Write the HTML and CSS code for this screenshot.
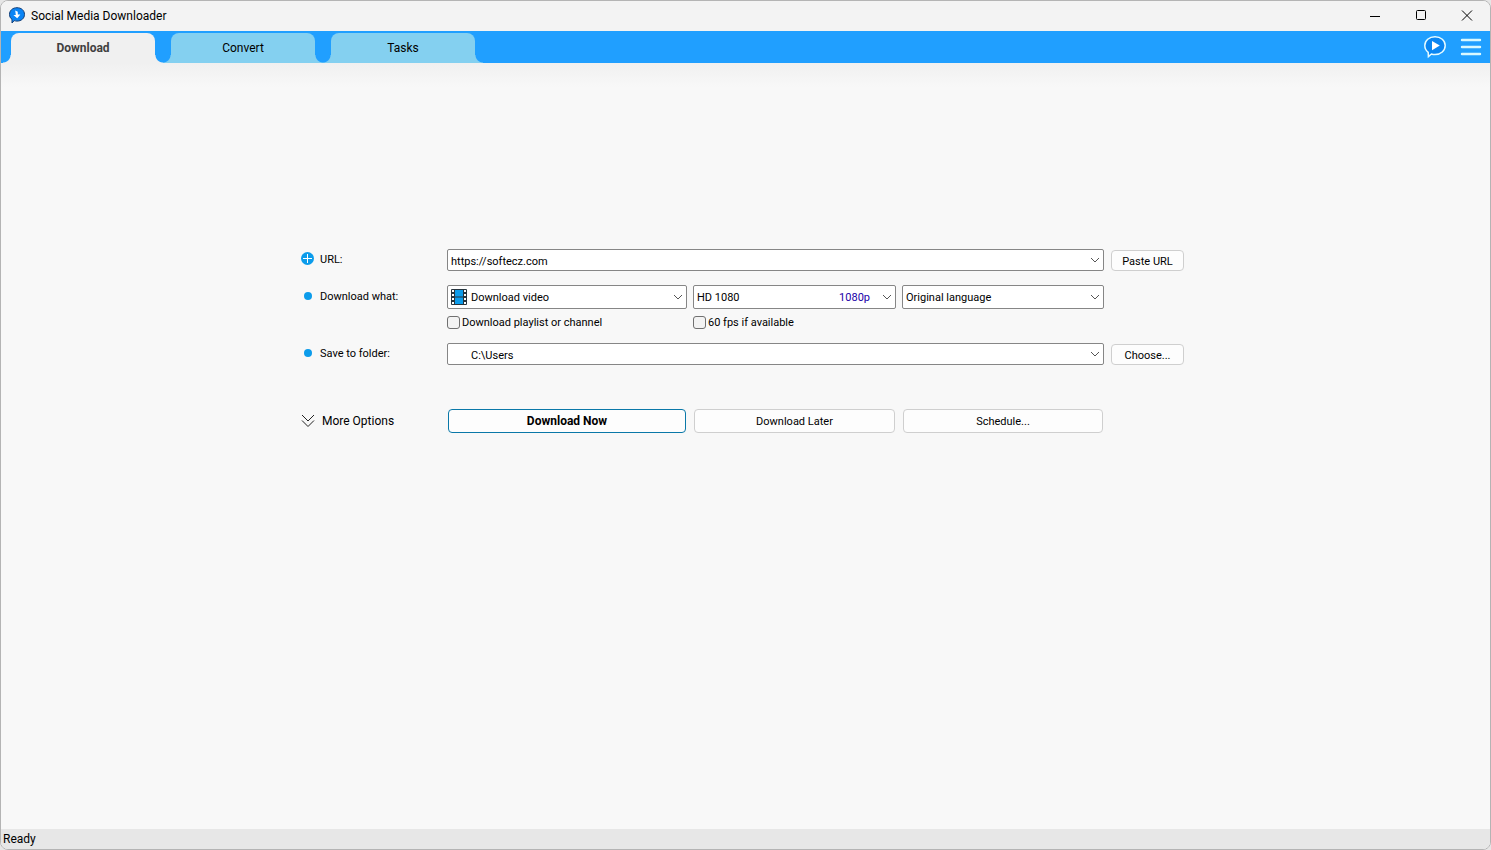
FILE: index.html
```html
<!DOCTYPE html>
<html lang="en">
<head>
    <meta charset="UTF-8">
    <meta name="viewport" content="width=device-width, initial-scale=1.0">
    <title>Social Media Downloader</title>
    <link rel="stylesheet" href="styles.css">
</head>
<body>
    <div class="window">
        <header class="titlebar">
            <svg class="app-icon" width="18" height="18" viewBox="0 0 18 18">
                <path d="M9 0.700C13.400 0.700 16.500 3.500 16.500 7.400S13.400 14.100 9 14.100C7.900 14.100 7 13.900 6.200 13.600L4 16V12.400C2.400 11.200 1.500 9.500 1.500 7.400C1.500 3.500 4.600 0.700 9 0.700Z" fill="#0a84f5" stroke="#123f78" stroke-width="1"/>
                <path d="M7.200 3.600L9.800 4.800L9.800 7.400L12.400 7.600L9.200 11.200L5.400 8H7.800Z" fill="#fff"/>
            </svg>
            <h1>Social Media Downloader</h1>
            <div class="window-buttons">
                <button type="button" aria-label="Minimize">
                    <svg width="12" height="12" viewBox="0 0 12 12"><path d="M1 6.500H11" stroke="#000"/></svg>
                </button>
                <button type="button" aria-label="Maximize">
                    <svg width="12" height="12" viewBox="0 0 12 12"><rect x="1.500" y="0.500" width="9" height="9" rx="1" fill="none" stroke="#000"/></svg>
                </button>
                <button type="button" aria-label="Close">
                    <svg width="12" height="12" viewBox="0 0 12 12"><path d="M1 0.500L11 10.500M11 0.500L1 10.500" stroke="#000"/></svg>
                </button>
            </div>
        </header>

        <nav class="tabbar">
            <button type="button" class="tab active">Download</button>
            <button type="button" class="tab">Convert</button>
            <button type="button" class="tab">Tasks</button>
            <div class="tabbar-tools">
                <button type="button" aria-label="Play">
                    <svg width="24" height="24" viewBox="0 0 24 24">
                        <path d="M12 1.700C17.800 1.700 22.200 5.500 22.200 10.600S17.800 19.600 12 19.600C10.700 19.600 9.500 19.400 8.400 19L5.400 21.600L5.200 17.400C3 15.700 1.800 13.400 1.800 10.600C1.800 5.500 6.200 1.700 12 1.700Z" fill="#0b86f2" stroke="#e6fbff" stroke-width="1.500"/>
                        <path d="M9 6L16.800 10.600L9 15.200Z" fill="#fff"/>
                    </svg>
                </button>
                <button type="button" aria-label="Menu">
                    <svg width="24" height="24" viewBox="0 0 24 24">
                        <path d="M3 5H21M3 12H21M3 19H21" stroke="#d8f8ff" stroke-width="2.400" stroke-linecap="round"/>
                    </svg>
                </button>
            </div>
        </nav>

        <main>
            <form class="download-form">
                <div class="row">
                    <label class="row-label" for="url">
                        <svg width="14" height="14" viewBox="0 0 14 14">
                            <circle cx="6.500" cy="6.500" r="6.500" fill="#0c9ceb"/>
                            <path d="M6.500 2V11M2 6.500H11" stroke="#fff" stroke-width="1"/>
                        </svg>
                        URL:
                    </label>
                    <div class="combo wide">
                        <input type="text" id="url" value="https://softecz.com">
                        <svg class="chevron" width="10" height="6" viewBox="0 0 10 6"><path d="M1 1L5 5L9 1"/></svg>
                    </div>
                    <button type="button" class="btn side">Paste URL</button>
                </div>

                <div class="row">
                    <label class="row-label" for="what">
                        <svg width="14" height="14" viewBox="0 0 14 14"><circle cx="7" cy="7" r="4" fill="#0c9ceb"/></svg>
                        Download what:
                    </label>
                    <div class="combo tall with-icon">
                        <svg class="film" width="16" height="16" viewBox="0 0 16 16">
                            <rect width="16" height="16" rx="1" fill="#26343d"/>
                            <rect x="4" y="1" width="8" height="6.500" fill="#0c9ceb"/>
                            <rect x="4" y="8.500" width="8" height="6.500" fill="#0c9ceb"/>
                            <path d="M2 1V16M14 1V16" stroke="#fff" stroke-width="2" stroke-dasharray="2 2"/>
                        </svg>
                        <select id="what">
                            <option>Download video</option>
                        </select>
                        <svg class="chevron" width="10" height="6" viewBox="0 0 10 6"><path d="M1 1L5 5L9 1"/></svg>
                    </div>
                    <div class="combo tall">
                        <select aria-label="Quality">
                            <option>HD 1080</option>
                        </select>
                        <span class="resolution">1080p</span>
                        <svg class="chevron" width="10" height="6" viewBox="0 0 10 6"><path d="M1 1L5 5L9 1"/></svg>
                    </div>
                    <div class="combo tall">
                        <select aria-label="Language">
                            <option>Original language</option>
                        </select>
                        <svg class="chevron" width="10" height="6" viewBox="0 0 10 6"><path d="M1 1L5 5L9 1"/></svg>
                    </div>
                </div>

                <div class="row checks">
                    <label class="check playlist"><input type="checkbox">Download playlist or channel</label>
                    <label class="check"><input type="checkbox">60 fps if available</label>
                </div>

                <div class="row">
                    <label class="row-label" for="folder">
                        <svg width="14" height="14" viewBox="0 0 14 14"><circle cx="7" cy="7" r="4" fill="#0c9ceb"/></svg>
                        Save to folder:
                    </label>
                    <div class="combo wide with-icon">
                        <select id="folder">
                            <option>C:\Users</option>
                        </select>
                        <svg class="chevron" width="10" height="6" viewBox="0 0 10 6"><path d="M1 1L5 5L9 1"/></svg>
                    </div>
                    <button type="button" class="btn side">Choose...</button>
                </div>

                <div class="row actions">
                    <button type="button" class="more">
                        <svg width="14" height="14" viewBox="0 0 14 14"><path d="M1 1L7 7L13 1M1 6.500L7 12.500L13 6.500" fill="none" stroke="#222"/></svg>
                        More Options
                    </button>
                    <button type="button" class="btn primary">Download Now</button>
                    <button type="button" class="btn">Download Later</button>
                    <button type="button" class="btn">Schedule...</button>
                </div>
            </form>
        </main>

        <footer class="statusbar">Ready</footer>
    </div>
</body>
</html>
```
FILE: styles.css
```css
:root {
    --blue: #209fff;
    --tab: #84d0f0;
    --tab-active: #f0f0f0;
    --page: #f8f8f8;
    --field-border: #868686;
}

* {
    box-sizing: border-box;
}

body {
    margin: 0;
    background: #e6e6e6;
    color: #000;
    font-family: Tahoma, Roboto, sans-serif;
    font-size: 11px;
}

button, input, select {
    font: inherit;
    color: inherit;
    margin: 0;
}

button {
    padding: 0;
    border: none;
    background: none;
}

.window {
    min-height: 100vh;
    display: flex;
    flex-direction: column;
    border: 1px solid #b4b4b4;
    border-radius: 8px;
    overflow: hidden;
    background: var(--page);
}

/* title bar */
.titlebar {
    height: 30px;
    display: flex;
    align-items: center;
    gap: 5px;
    padding-left: 7px;
    background: #f3f3f3;
}

h1 {
    margin: 0;
    font-family: "Segoe UI", Roboto, sans-serif;
    font-size: 12px;
    font-weight: 400;
}

.window-buttons {
    display: flex;
    margin-left: auto;
}

.window-buttons button {
    width: 46px;
    height: 28px;
}

.window-buttons svg {
    display: block;
    margin: 0 auto;
}

/* tabs */
.tabbar {
    height: 32px;
    display: flex;
    align-items: flex-end;
    gap: 16px;
    padding-left: 10px;
    background: var(--blue);
}

.tab {
    --fill: var(--tab);
    position: relative;
    width: 144px;
    height: 30px;
    border-radius: 8px 8px 0 0;
    background: var(--fill);
    font-family: "Segoe UI", Roboto, sans-serif;
    font-size: 12px;
}

.tab.active {
    --fill: var(--tab-active);
    color: #404040;
    font-weight: 700;
}

.tab::before,
.tab::after {
    content: '';
    position: absolute;
    bottom: 0;
    width: 8px;
    height: 8px;
}

.tab::before {
    right: 100%;
    background: radial-gradient(circle at 0 0, transparent 7px, var(--fill) 8px);
}

.tab::after {
    left: 100%;
    background: radial-gradient(circle at 100% 0, transparent 7px, var(--fill) 8px);
}

.tabbar-tools {
    display: flex;
    align-self: center;
    gap: 12px;
    margin-left: auto;
    padding-right: 7px;
}

.tabbar-tools svg {
    display: block;
}

/* form */
main {
    flex: 1;
    padding: 186px 6px 40px 0;
    background: linear-gradient(#f0f0f0, var(--page) 24px);
}

.download-form {
    width: 883px;
    margin: 0 auto;
    display: flex;
    flex-direction: column;
    gap: 14px;
}

.row {
    display: grid;
    grid-template-columns: 140px 240px 203px 202px 74px;
    column-gap: 6px;
    align-items: end;
}

.row-label {
    align-self: center;
    display: flex;
    align-items: center;
    gap: 5px;
    padding-bottom: 2px;
}

.combo {
    position: relative;
    height: 22px;
    border: 1px solid var(--field-border);
    border-radius: 2px;
    background: #fff;
}

.combo.wide {
    grid-column: span 3;
}

.combo.tall {
    height: 24px;
}

.combo input,
.combo select {
    display: block;
    width: 100%;
    height: 100%;
    padding: 0 24px 0 3px;
    border: none;
    outline: none;
    background: transparent;
    appearance: none;
}

.combo.wide input,
.combo.wide select {
    padding-top: 2px;
}

.combo.with-icon select {
    padding-left: 23px;
}

.chevron,
.film,
.resolution {
    position: absolute;
    top: 50%;
    transform: translateY(-50%);
    pointer-events: none;
}

.chevron {
    right: 3px;
    fill: none;
    stroke: #555;
}

.film {
    left: 3px;
}

.resolution {
    right: 25px;
    color: #1a00a8;
}

.checks {
    margin-top: -8px;
}

.check {
    display: flex;
    align-items: center;
    gap: 2px;
    height: 14px;
    white-space: nowrap;
}

.check.playlist {
    grid-column: 2;
}

.check input {
    width: 13px;
    height: 13px;
    border: 1px solid #707070;
    border-radius: 3px;
    background: #f3f3f3;
    appearance: none;
}

.btn {
    height: 24px;
    margin: 0 1px;
    border: 1px solid #cfcfcf;
    border-radius: 4px;
    background: #fdfdfd;
}

.btn.side {
    height: 21px;
    margin: 0 0 0 1px;
    padding-top: 2px;
}

.btn.primary {
    border-color: #0a78a8;
    font-size: 12px;
    font-weight: 700;
}

.actions {
    margin-top: 30px;
}

.more {
    align-self: center;
    display: flex;
    align-items: center;
    gap: 7px;
    font-family: "Segoe UI", Roboto, sans-serif;
    font-size: 12px;
}

/* status bar */
.statusbar {
    padding: 1px 0 0 2px;
    background: #e7e7e7;
    font-family: "Segoe UI", Roboto, sans-serif;
    font-size: 12px;
    line-height: 19px;
}
```
